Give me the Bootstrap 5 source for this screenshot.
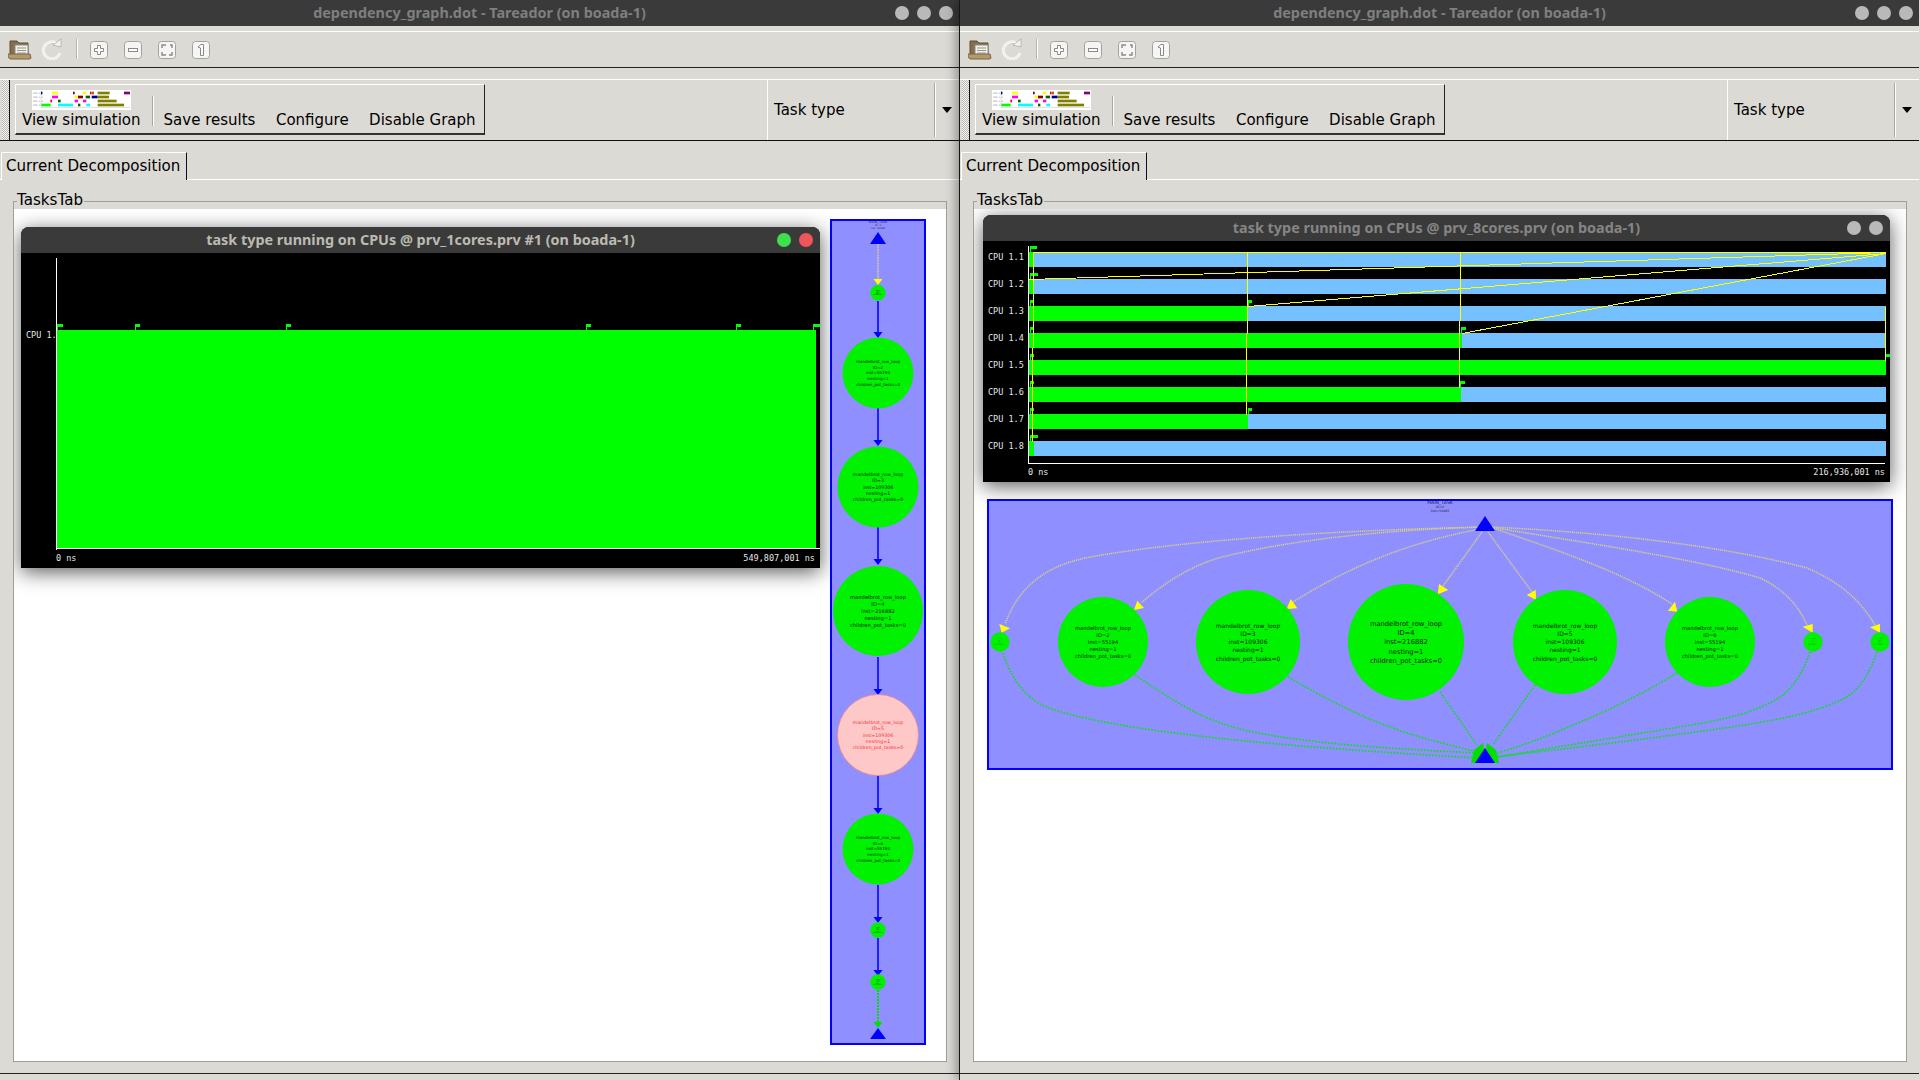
<!DOCTYPE html>
<html lang="en">
<head>
  <meta charset="UTF-8">
  <title>Tareador</title>
  <link rel="stylesheet" href="https://cdn.jsdelivr.net/npm/bootstrap@5.3.0/dist/css/bootstrap.min.css">
  <style>
    body { margin: 0; background: #dcdad5; font-family: "DejaVu Sans", sans-serif; color: #000; overflow: hidden; }
    .app-desk { width: 1920px; height: 1080px; }
    .app-win { width: 960px; height: 1080px; background: #dcdad5; border-right: 1px solid #1c1c1c; }
    .app-win + .app-win { border-right-color: transparent; box-shadow: -4px 0 10px rgba(0, 0, 0, .35); z-index: 2; }
    .win-title { height: 26px; flex: none; padding-bottom: 2px; background: #3a3a3a; color: #7f7f7f; font: bold 14.4px "Noto Sans", sans-serif; }
    .win-dots { position: absolute; right: 6px; top: 6px; gap: 8px; }
    .float-title .win-dots { right: 7px; }
    .win-dot { width: 14px; height: 14px; border-radius: 50%; background: #b9b9b9; }
    .win-dot-go { background: #3fe04f; }
    .win-dot-stop { background: #f0555b; }

    .tool-one { margin-top: 5px; height: 37px; flex: none; border-top: 1px solid #fff; border-bottom: 1px solid #222; padding-left: 8px; }
    .tool-two { margin-top: 11px; height: 62px; flex: none; border-top: 1px solid #fff; border-bottom: 1px solid #111; }
    .tool-grip { width: 8px; margin-left: 2px; border-right: 1px solid #111; background: repeating-conic-gradient(#f4f4f2 0 25%, #b9b7b2 0 50%) 0 0 / 2px 2px; }
    .tool-frame { margin: 4px 0 0 5px; height: 51px; padding-left: 0; border: 1px solid #fff; border-right-color: #222; border-bottom: 2px solid #333; font-size: 15px; line-height: 18px; }
    .tool-btn { padding: 0 6px 4px 6px; white-space: nowrap; }
    .tool-btn-wide { padding: 0 10.5px 4px 10px; }
    .tool-btn-wide:last-child { padding-right: 8px; }
    .tool-sep { width: 2px; height: 30px; margin: 0 0 7px 5px; background: #fff; border-left: 1px solid #a9a7a2; }
    .tool-thumb { width: 99px; height: 20px; display: block; margin-bottom: 1px; }
    .tool-combo { margin-left: auto; width: 192px; border-left: 1px solid #fff; font-size: 15px; padding-left: 6px; }
    .tool-combo-sep { width: 2px; height: 54px; margin: 0 6px 0 0; background: #fff; border-left: 1px solid #a9a7a2; }
    .tool-arrow { width: 0; height: 0; border: 5px solid transparent; border-top: 6px solid #000; border-bottom: 0; margin-right: 7px; }

    .tab-row { height: 39px; flex: none; border-bottom: 1px solid #fff; }
    .tab-item { margin: 0 0 -1px 1px; height: 28px; width: 186px; background: #dcdad5; border-top: 1px solid #fff; border-left: 1px solid #fff; border-right: 1px solid #111; font-size: 15.1px; padding-left: 4px; white-space: nowrap; }

    .tasks-group { margin: 21px 12px 11px 13px; flex: 1 1 auto; min-height: 0; border: 1px solid #a09e99; padding-top: 7px; position: relative; }
    .tasks-label { position: absolute; left: 3px; top: -11px; background: #dcdad5; padding-right: 1px; font-size: 15.1px; line-height: 18px; }
    .tasks-pane { height: 100%; background: #fff; overflow: hidden; }
    .win-foot { height: 7px; flex: none; border-top: 1px solid #222; }

    .float-win { flex: none; background: #000; border-radius: 8px 8px 0 0; box-shadow: 0 4px 20px rgba(0, 0, 0, .65); }
    .float-title { height: 26px; padding-bottom: 2px; background: #3a3a3a; border-radius: 8px 8px 0 0; font: bold 14.4px "Noto Sans", sans-serif; color: #bdbab2; }
    .float-title-off { color: #858585; }
    .float-one { width: 799px; margin: 18px 0 0 7px; }
    .float-eight { width: 907px; margin: 6px 0 0 9px; }
    .chart-one { display: block; width: 799px; height: 315px; }
    .chart-eight { display: block; width: 907px; height: 241px; }
    .chart-text { font-family: "DejaVu Sans Mono", monospace; font-size: 8.5px; fill: #e6e6e6; }
    .chart-crisp { shape-rendering: crispEdges; }
    .graph-tall { flex: none; display: block; width: 96px; height: 826px; margin: 10px 0 0 10px; }
    .graph-wide { flex: none; display: block; width: 906px; height: 271px; margin: 17px 0 0 13px; }
    .node-text { font-family: "DejaVu Sans", sans-serif; text-anchor: middle; }
    .edge-call { fill: none; stroke: #d9d27c; stroke-width: 1.5; stroke-dasharray: 1.2 .9; }
    .edge-done { fill: none; stroke: #00e800; stroke-width: 1.6; stroke-dasharray: 1.6 1.6; }
  </style>
</head>
<body>
  <template id="chrome-tpl">
    <div class="tool-one d-flex align-items-center">
      <svg width="210" height="24" viewBox="0 0 210 24">
        <!-- folder -->
        <path d="M2 7V3h7l2 2h9v13H2z" fill="#84704f" stroke="#5f4e33"/>
        <rect x="7" y="7" width="13" height="10" fill="#efeee9" stroke="#8d8b85"/>
        <path d="M9 10h9M9 12.5h9M9 15h9" stroke="#9b9993"/>
        <path d="M0 16h22l1 4q0 1-2 1H3q-2 0-3-2z" fill="#b39a6c" stroke="#7a6542"/>
        <!-- reload -->
        <path d="M49 5.5a8.5 8.5 0 1 0 3 9.5" fill="none" stroke="#a9a8a5" stroke-width="1" transform="translate(0 1)"/>
        <path d="M49 5.5a8.5 8.5 0 1 0 3 9.5" fill="none" stroke="#f2f2f0" stroke-width="3"/>
        <path d="M45 7l8-6v8z" fill="#f2f2f0" stroke="#a9a8a5" stroke-width=".7"/>
        <rect x="68" y="1" width="1" height="20" fill="#b5b3ae"/><rect x="69" y="1" width="1" height="20" fill="#fff"/>
        <!-- zoom buttons -->
        <g fill="#f5f5f3" stroke="#a5a39e">
          <rect x="82.5" y="3.5" width="17" height="17" rx="3"/>
          <rect x="116.5" y="3.5" width="17" height="17" rx="3"/>
          <rect x="150.5" y="3.5" width="17" height="17" rx="3"/>
          <rect x="184.5" y="3.5" width="17" height="17" rx="3"/>
        </g>
        <path d="M89.5 7.5h3v3h3v3h-3v3h-3v-3h-3v-3h3z" fill="#fff" stroke="#8b8985"/>
        <rect x="120.5" y="10.5" width="9" height="3" fill="#fff" stroke="#8b8985"/>
        <path d="M154 10V7h4M162 7h2v3M154 14v3h4M164 14v3h-3" fill="none" stroke="#8b8985" stroke-width="1.4"/>
        <path d="M190 9l3-2.5h2.500v11h-3V10z" fill="#fff" stroke="#8b8985"/>
      </svg>
    </div>
    <div class="tool-two d-flex align-items-stretch">
      <div class="tool-grip"></div>
      <div class="tool-frame d-flex align-items-end">
        <div class="tool-btn d-flex flex-column align-items-center">
          <svg class="tool-thumb" viewBox="96 273 297 60">
            <rect x="96" y="273" width="297" height="60" fill="#fff"/>
            <path d="M123 275v50h267" fill="none" stroke="#bbb" stroke-width="1.5"/>
            <g font-family="DejaVu Sans Mono, monospace" font-size="7" fill="#777">
              <text x="99" y="285">CPU 1.1</text><text x="99" y="297">CPU 1.2</text><text x="99" y="309">CPU 1.3</text><text x="99" y="321">CPU 1.4</text>
            </g>
            <g class="thumb-bars"></g>
          </svg>
          <span>View simulation</span>
        </div>
        <div class="tool-sep"></div>
        <div class="tool-btn tool-btn-wide">Save results</div>
        <div class="tool-btn tool-btn-wide">Configure</div>
        <div class="tool-btn tool-btn-wide">Disable Graph</div>
      </div>
      <div class="tool-combo d-flex align-items-center">
        <span class="flex-grow-1">Task type</span>
        <div class="tool-combo-sep"></div>
        <div class="tool-arrow"></div>
      </div>
    </div>
    <div class="tab-row d-flex align-items-end">
      <div class="tab-item d-flex align-items-center">Current Decomposition</div>
    </div>
  </template>

  <div class="app-desk d-flex">
    <section class="app-win d-flex flex-column position-relative">
      <div class="win-title d-flex align-items-center justify-content-center position-relative">
        dependency_graph.dot - Tareador (on boada-1)
        <div class="win-dots d-flex"><i class="win-dot"></i><i class="win-dot"></i><i class="win-dot"></i></div>
      </div>
      <div class="chrome-slot d-flex flex-column"></div>
      <div class="tasks-group">
        <span class="tasks-label">TasksTab</span>
        <div class="tasks-pane d-flex align-items-start">
          <div class="float-win float-one">
            <div class="float-title d-flex align-items-center justify-content-center position-relative">
              task type running on CPUs @ prv_1cores.prv #1 (on boada-1)
              <div class="win-dots d-flex"><i class="win-dot win-dot-go"></i><i class="win-dot win-dot-stop"></i></div>
            </div>
            <svg class="chart-one" id="chart-one" viewBox="21 253 799 315"></svg>
          </div>
          <svg class="graph-tall" id="graph-tall" viewBox="830 219 96 826"></svg>
        </div>
      </div>
      <div class="win-foot"></div>
    </section>

    <section class="app-win d-flex flex-column position-relative">
      <div class="win-title d-flex align-items-center justify-content-center position-relative">
        dependency_graph.dot - Tareador (on boada-1)
        <div class="win-dots d-flex"><i class="win-dot"></i><i class="win-dot"></i><i class="win-dot"></i></div>
      </div>
      <div class="chrome-slot d-flex flex-column"></div>
      <div class="tasks-group">
        <span class="tasks-label">TasksTab</span>
        <div class="tasks-pane d-flex flex-column align-items-start">
          <div class="float-win float-eight">
            <div class="float-title float-title-off d-flex align-items-center justify-content-center position-relative">
              task type running on CPUs @ prv_8cores.prv (on boada-1)
              <div class="win-dots d-flex"><i class="win-dot"></i><i class="win-dot"></i></div>
            </div>
            <svg class="chart-eight" id="chart-eight" viewBox="983 241 907 241"></svg>
          </div>
          <svg class="graph-wide" id="graph-wide" viewBox="987 499 906 271"></svg>
        </div>
      </div>
      <div class="win-foot"></div>
    </section>
  </div>

  <script>
    // toolbars are the same in both windows
    const tpl = document.getElementById('chrome-tpl');
    const thumbRows = [
      [278, [[123,127,'#000080'],[156,174,'#ffff00'],[219,224,'#8b0000'],[249,259,'#ffff00'],[270,275,'#ff0000'],[277,281,'#8b0000'],[293,329,'#808000'],[372,390,'#800080']]],
      [290, [[156,174,'#ff00ff'],[224,234,'#ffff00'],[234,249,'#8b0000'],[257,270,'#006400'],[275,293,'#000080'],[293,327,'#808000']]],
      [302, [[151,156,'#ff0000'],[174,182,'#006400'],[224,234,'#ff00ff'],[249,259,'#ff00ff'],[293,350,'#808000']]],
      [314, [[124,152,'#00ff00'],[174,219,'#00ffff'],[234,241,'#006400'],[259,270,'#00ffff'],[293,372,'#808000']]]
    ];
    document.querySelectorAll('.chrome-slot').forEach(slot => {
      slot.appendChild(tpl.content.cloneNode(true));
      let bars = '';
      thumbRows.forEach(([y, spans]) => spans.forEach(([a, b, c]) => {
        bars += `<rect x="${a}" y="${y}" width="${b - a}" height="8" fill="${c}"/>`;
      }));
      slot.querySelector('.thumb-bars').innerHTML = bars;
    });

    function flag(x, y, w) {
      return `<rect x="${x}" y="${y}" width="${w}" height="3" fill="#00ff00"/><rect x="${x}" y="${y}" width="1" height="6" fill="#00ff00"/>`;
    }

    // 1 core chart
    let one = `<text class="chart-text" x="26" y="338">CPU 1.1</text>`;
    one += `<g class="chart-crisp"><rect x="57" y="330" width="759" height="218" fill="#00ff00"/>`;
    one += `<rect x="56" y="258" width="1" height="292" fill="#fff"/><rect x="56" y="548" width="764" height="1" fill="#fff"/>`;
    [[57,6],[135,5],[286,5],[586,5],[736,5],[813,7]].forEach(([x, w]) => { one += flag(x, 324, w); });
    one += `</g><text class="chart-text" x="56" y="561">0 ns</text>`;
    one += `<text class="chart-text" x="815" y="561" text-anchor="end">549,807,001 ns</text>`;
    document.getElementById('chart-one').innerHTML = one;

    // 8 cores chart
    const greenEnd = [1034, 1034, 1248, 1462, 1886, 1461, 1248, 1034];
    let eight = '<g class="chart-crisp">';
    greenEnd.forEach((end, i) => {
      const y = 252 + i * 27;
      eight += `<rect x="1029" y="${y}" width="857" height="15" fill="#75c0ff"/>`;
      eight += `<rect x="1029" y="${y}" width="${end - 1029}" height="15" fill="#00ff00"/>`;
    });
    [[1030,246,7],[1030,273,8],[1030,300,4],[1248,300,4],[1030,327,4],[1461,327,5],[1030,354,4],[1885,354,5],
     [1030,381,4],[1460,381,5],[1030,408,4],[1248,408,4],[1030,435,8]].forEach(([x, y, w]) => { eight += flag(x, y, w); });
    [[1033,252,1886,252],[1033,252,1033,347],[1032,347,1032,441],[1247,252,1247,333],[1246,333,1246,414],
     [1460,252,1460,320],[1459,320,1459,387],[1885,306,1885,360],
     [1029,279,1886,252],[1248,306,1886,253],[1462,333,1886,253]].forEach(([a, b, c, d]) => {
      eight += `<line x1="${a}" y1="${b + .5}" x2="${c}" y2="${d + .5}" stroke="#ffff00"/>`;
    });
    eight += `<rect x="1028" y="246" width="1" height="217" fill="#fff"/><rect x="1028" y="463" width="857" height="1" fill="#fff"/></g>`;
    greenEnd.forEach((end, i) => {
      eight += `<text class="chart-text" x="988" y="${260 + i * 27}">CPU 1.${i + 1}</text>`;
    });
    eight += `<text class="chart-text" x="1028" y="475">0 ns</text><text class="chart-text" x="1885" y="475" text-anchor="end">216,936,001 ns</text>`;
    document.getElementById('chart-eight').innerHTML = eight;

    // graph helpers
    function node(cx, cy, r, lines, fill, color, stroke) {
      const size = r * 0.116, gap = r * 0.158;
      let s = `<circle cx="${cx}" cy="${cy}" r="${r}" fill="${fill}"${stroke ? ` stroke="${stroke}" stroke-width=".8"` : ''}/>`;
      lines.forEach((t, i) => {
        s += `<text class="node-text" x="${cx}" y="${cy + (i - 2) * gap + size * .35}" font-size="${size}" fill="${color}">${t}</text>`;
      });
      return s;
    }
    const rowLoop = (id, inst) => ['mandelbrot_row_loop', 'ID=' + id, 'inst=' + inst, 'nesting=1', 'children_pot_tasks=0'];
    const tiny = id => ['start_task', 'ID=' + id, 'inst=1', 'nesting=1', 'children_pot_tasks=0'];
    const head = (cx, y, size, gap) => ['MAIN_TASK', 'ID=0', 'inst=50483'].map((t, i) =>
      `<text class="node-text" x="${cx}" y="${y + i * gap}" font-size="${i ? size * .7 : size}" fill="#223">${t}</text>`).join('');
    const tri = (cx, top, bottom, hw, c) => `<polygon points="${cx},${top} ${cx - hw},${bottom} ${cx + hw},${bottom}" fill="${c}"/>`;
    const GREEN = '#00f200', INK = '#012001';

    // vertical graph, 1 core
    const cx = 878;
    let tall = `<rect x="831" y="220" width="94" height="824" fill="#8f8fff" stroke="#0000ff" stroke-width="2"/>`;
    tall += head(cx, 222.5, 3.4, 3.2) + tri(cx, 232, 244, 8, '#0000ff');
    tall += `<line x1="${cx}" y1="244" x2="${cx}" y2="280" stroke="#b9b9b9" stroke-width="2" stroke-dasharray="2 .6"/>`;
    tall += `<polygon points="873.5,279 882.5,279 ${cx},285" fill="#ffff00"/>`;
    [[301,338],[408,446],[527,565],[657,695],[776,814],[885,923],[938,976]].forEach(([a, b]) => {
      tall += `<line x1="${cx}" y1="${a}" x2="${cx}" y2="${b - 4}" stroke="#2020ff" stroke-width="2"/>`;
      tall += `<polygon points="873.5,${b - 6} 882.5,${b - 6} ${cx},${b}" fill="#0000ff"/>`;
    });
    tall += `<line x1="${cx}" y1="990" x2="${cx}" y2="1023" stroke="#00e000" stroke-width="2" stroke-dasharray="2 1"/>`;
    tall += `<polygon points="873.5,1022 882.5,1022 ${cx},1028" fill="#00e000"/>`;
    tall += tri(cx, 1028, 1039, 8, '#0000ff');
    tall += node(cx, 292.7, 7.7, tiny(1), GREEN, INK);
    tall += node(cx, 373, 35.5, rowLoop(2, 55194), GREEN, INK);
    tall += node(cx, 487, 40.5, rowLoop(3, 109306), GREEN, INK);
    tall += node(cx, 611, 45, rowLoop(4, 216882), GREEN, INK);
    tall += node(cx, 735, 40.5, rowLoop(5, 109306), '#ffc8c8', '#f03030', '#e88');
    tall += node(cx, 849, 35.5, rowLoop(6, 55194), GREEN, INK);
    tall += node(cx, 930, 7.7, tiny(7), GREEN, INK);
    tall += node(cx, 982, 7.7, tiny(8), GREEN, INK);
    document.getElementById('graph-tall').innerHTML = tall;

    // wide graph, 8 cores
    const calls = [
      'M1485 527C1340 530 1180 540 1085 558C1040 568 1018 590 1005 624',
      'M1485 527C1380 530 1290 540 1218 558C1190 567 1165 582 1141 603',
      'M1485 528C1420 540 1360 560 1293 602',
      'M1482 532L1443 586',
      'M1488 532L1532 592',
      'M1490 527C1550 548 1620 570 1672 604',
      'M1490 527C1600 545 1700 560 1760 578C1785 590 1798 605 1807 625',
      'M1490 527C1600 532 1720 545 1807 568C1840 582 1860 600 1875 625'
    ];
    const dones = [
      'M1003 653C1012 680 1025 695 1040 704C1100 732 1300 748 1478 758',
      'M1135 675C1165 695 1190 712 1218 722C1270 742 1380 748 1478 753',
      'M1288 677C1320 695 1350 712 1385 725C1410 735 1440 743 1478 752',
      'M1440 692L1477 745',
      'M1535 685L1493 745',
      'M1677 673C1640 695 1610 710 1573 725C1550 735 1525 745 1497 753',
      'M1810 652C1803 672 1795 685 1783 695C1750 718 1700 723 1673 728C1600 740 1550 748 1497 757',
      'M1877 652C1870 672 1862 685 1850 695C1810 720 1720 728 1673 735C1600 745 1550 750 1497 757'
    ];
    const heads = ['999.3,624 1010,628.3 1001.7,632.7', '1134,610 1144,608 1137.3,600.7', '1286.7,609 1297.3,608.3 1290.7,599',
      '1437.7,594.3 1448.3,590 1439,584', '1536,600 1535.7,590 1526.7,595', '1677.3,611.7 1668,610.7 1675,601.7',
      '1812.7,632.7 1802.7,626.7 1812.7,624', '1880,632.7 1870,627.3 1880,624'];
    let wide = `<rect x="988" y="500" width="904" height="269" fill="#8f8fff" stroke="#0000ff" stroke-width="2"/>`;
    wide += head(1440, 503.5, 4.6, 4);
    dones.forEach(d => { wide += `<path class="edge-done" d="${d}"/>`; });
    calls.forEach(d => { wide += `<path class="edge-call" d="${d}"/>`; });
    heads.forEach(p => { wide += `<polygon points="${p}" fill="#ffff00"/>`; });
    wide += `<polygon points="1471,763 1474,750 1483,743 1486,763" fill="#00e000"/><polygon points="1499,763 1496,750 1487,743 1484,763" fill="#00e000"/>`;
    wide += tri(1485, 516, 531, 10, '#0000ff') + tri(1485, 748, 763, 10, '#0000ff');
    wide += node(1000, 642, 9.7, tiny(1), GREEN, INK);
    wide += node(1103, 642, 45, rowLoop(2, 55194), GREEN, INK);
    wide += node(1248, 642, 52, rowLoop(3, 109306), GREEN, INK);
    wide += node(1406, 642, 58, rowLoop(4, 216882), GREEN, INK);
    wide += node(1565, 642, 52, rowLoop(5, 109306), GREEN, INK);
    wide += node(1710, 642, 45, rowLoop(6, 55194), GREEN, INK);
    wide += node(1813, 642, 9.7, tiny(7), GREEN, INK);
    wide += node(1880, 642, 9.7, tiny(8), GREEN, INK);
    document.getElementById('graph-wide').innerHTML = wide;
  </script>
  <script src="https://cdn.jsdelivr.net/npm/bootstrap@5.3.0/dist/js/bootstrap.bundle.min.js"></script>
</body>
</html>
